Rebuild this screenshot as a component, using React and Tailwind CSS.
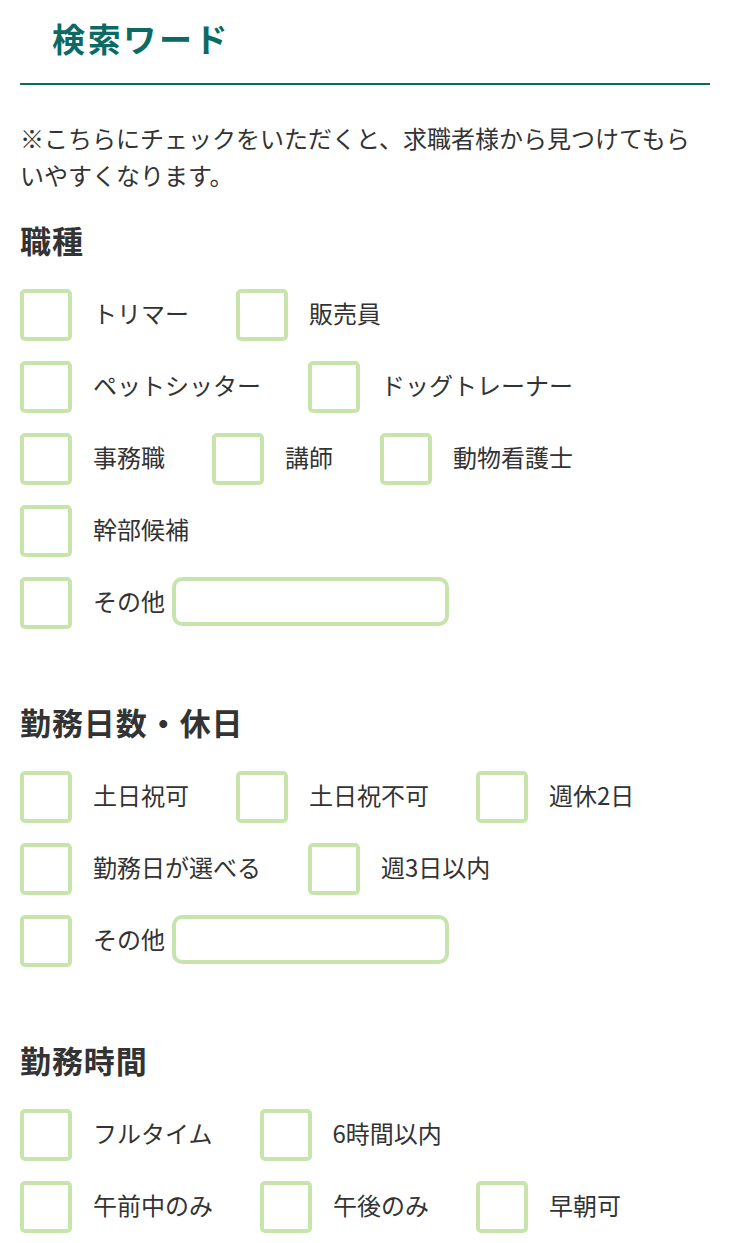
import React from 'react'

const sections = [
  {
    title: '職種',
    rows: [
      ['トリマー', '販売員'],
      ['ペットシッター', 'ドッグトレーナー'],
      ['事務職', '講師', '動物看護士'],
      ['幹部候補'],
    ],
  },
  {
    title: '勤務日数・休日',
    rows: [
      ['土日祝可', '土日祝不可', '週休2日'],
      ['勤務日が選べる', '週3日以内'],
    ],
  },
  {
    title: '勤務時間',
    rows: [
      ['フルタイム', '6時間以内'],
      ['午前中のみ', '午後のみ', '早朝可'],
    ],
    noOther: true,
  },
]

function Box() {
  return <span className="block h-[52px] w-[52px] shrink-0 rounded-[5px] border-4 border-[#c8e4ad] bg-white" />
}

function Check({ label }) {
  return (
    <label className="mr-[47px] flex items-center">
      <Box />
      <span className="ml-[21px] whitespace-nowrap pb-[4px]">{label}</span>
    </label>
  )
}

export default function App() {
  return (
    <div
      className="min-h-[1243px] bg-white pl-5 pr-[26px] text-[24px] text-[#333]"
      style={{ fontFamily: '"Noto Sans CJK JP", "Noto Sans", sans-serif' }}
    >
      <div className="border-b-2 border-[#0b6a64] pb-[21px] pt-[14px]">
        <h2 className="pl-8 text-[33px] font-bold leading-[48px] tracking-[0.08em] text-[#0b6a64]">検索ワード</h2>
      </div>

      <p className="mt-[34px] leading-[37px]">
        ※こちらにチェックをいただくと、求職者様から見つけてもらいやすくなります。
      </p>

      {sections.map((section, i) => (
        <section key={section.title} className={i === 0 ? 'mt-[27px]' : 'mt-[73px]'}>
          <h3 className="text-[31px] font-bold leading-[40px] tracking-[0.03em]">{section.title}</h3>
          <div className="mt-[29px] flex flex-col gap-5">
            {section.rows.map((row, j) => (
              <div key={j} className="flex h-[52px] items-center">
                {row.map((label) => <Check key={label} label={label} />)}
              </div>
            ))}
            {!section.noOther && (
              <div className="flex h-[52px] items-center">
                <Box />
                <span className="ml-[21px] whitespace-nowrap pb-[4px]">その他</span>
                <input
                  type="text"
                  className="-mt-[3px] ml-[7px] h-[49px] w-[277px] rounded-[10px] border-4 border-[#c8e4ad] bg-white px-3 outline-none"
                />
              </div>
            )}
          </div>
        </section>
      ))}
    </div>
  )
}
